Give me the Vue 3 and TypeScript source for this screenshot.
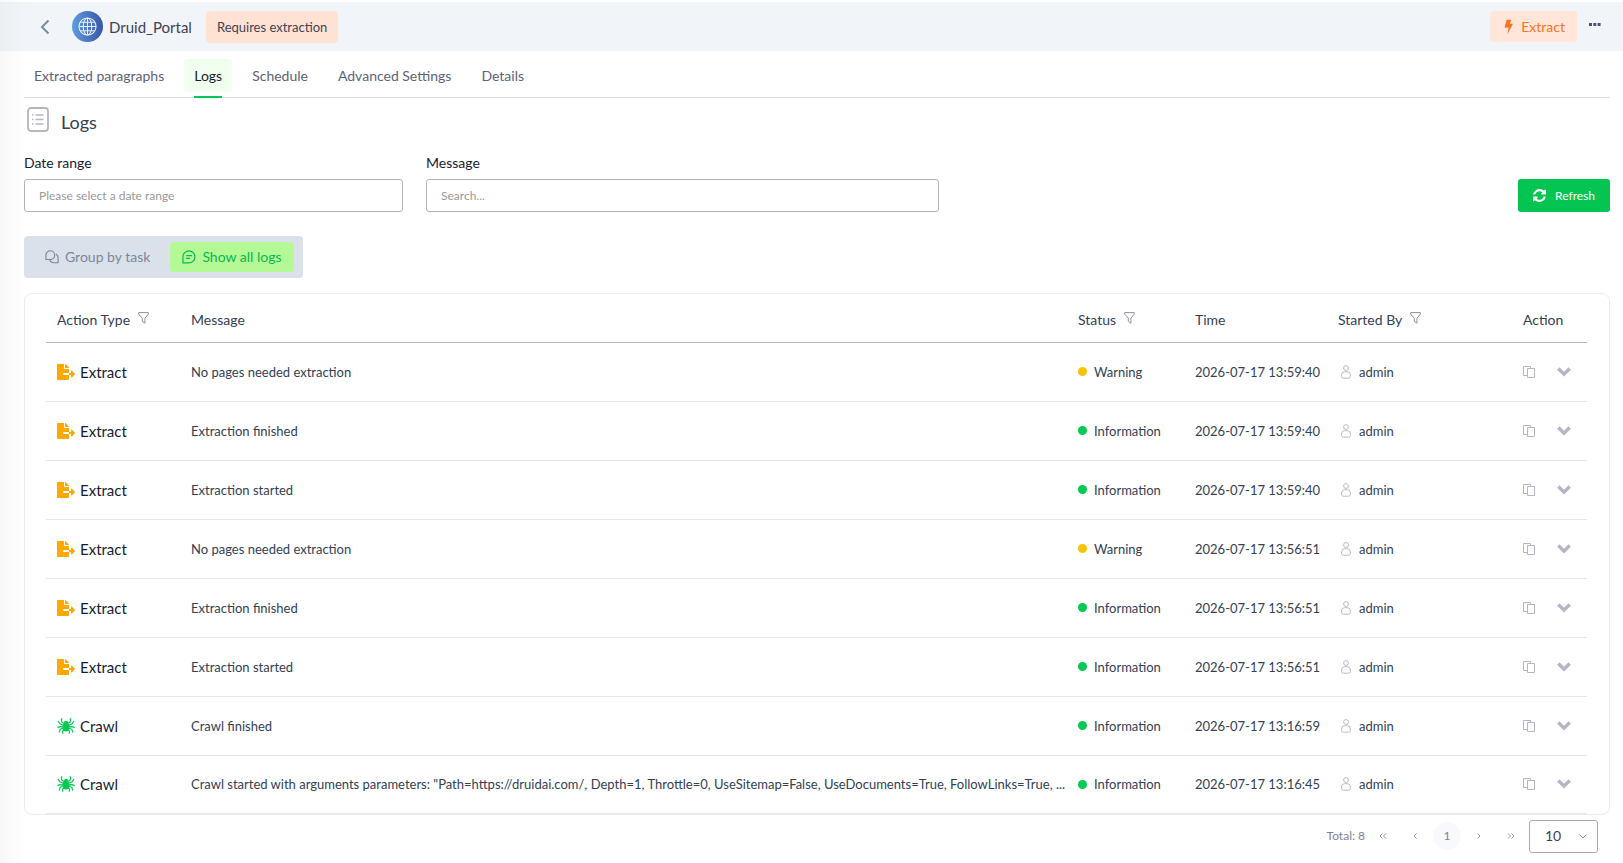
<script setup lang="ts">
import { ref } from 'vue'

interface LogRow {
  type: 'Extract' | 'Crawl'
  message: string
  status: 'Warning' | 'Information'
  time: string
  user: string
}

const tabs = ['Extracted paragraphs', 'Logs', 'Schedule', 'Advanced Settings', 'Details']
const activeTab = ref('Logs')
const view = ref<'group' | 'all'>('all')
const dateRange = ref('')
const search = ref('')
const pageSize = ref(10)

const rows: LogRow[] = [
  { type: 'Extract', message: 'No pages needed extraction', status: 'Warning', time: '2026-07-17 13:59:40', user: 'admin' },
  { type: 'Extract', message: 'Extraction finished', status: 'Information', time: '2026-07-17 13:59:40', user: 'admin' },
  { type: 'Extract', message: 'Extraction started', status: 'Information', time: '2026-07-17 13:59:40', user: 'admin' },
  { type: 'Extract', message: 'No pages needed extraction', status: 'Warning', time: '2026-07-17 13:56:51', user: 'admin' },
  { type: 'Extract', message: 'Extraction finished', status: 'Information', time: '2026-07-17 13:56:51', user: 'admin' },
  { type: 'Extract', message: 'Extraction started', status: 'Information', time: '2026-07-17 13:56:51', user: 'admin' },
  { type: 'Crawl', message: 'Crawl finished', status: 'Information', time: '2026-07-17 13:16:59', user: 'admin' },
  {
    type: 'Crawl',
    message: 'Crawl started with arguments parameters: "Path=https://druidai.com/, Depth=1, Throttle=0, UseSitemap=False, UseDocuments=True, FollowLinks=True, ...',
    status: 'Information',
    time: '2026-07-17 13:16:45',
    user: 'admin',
  },
]

const columns = [
  { label: 'Action Type', filter: true },
  { label: 'Message', filter: false },
  { label: 'Status', filter: true },
  { label: 'Time', filter: false },
  { label: 'Started By', filter: true },
  { label: 'Action', filter: false },
]
</script>

<template>
  <div class="page">
    <header class="topbar">
      <button class="bare back" aria-label="Back">
        <svg width="10" height="16" viewBox="0 0 10 16" fill="none" stroke="#7a8ba6" stroke-width="2"><path d="M8.500 1.500 2 8l6.500 6.500" /></svg>
      </button>
      <span class="avatar">
        <svg width="19" height="19" viewBox="0 0 20 20" fill="none" stroke="#e6eefb" stroke-width="1.100">
          <circle cx="10" cy="10" r="9" /><ellipse cx="10" cy="10" rx="4.500" ry="9" /><path d="M10 1v18M1 10h18M2.300 5.500h15.400M2.300 14.500h15.400" />
        </svg>
      </span>
      <h1>Druid_Portal</h1>
      <span class="badge">Requires extraction</span>
      <button class="extract">
        <svg width="9" height="16" viewBox="0 0 10 16" fill="#f97326"><path d="M3 0h5L6.500 4.500H10L3.800 16 5 8.500H0.500z" /></svg>
        Extract
      </button>
      <button class="bare more" aria-label="More">
        <svg width="12" height="3" viewBox="0 0 12 3" fill="#524d80"><path d="M0 0h3v3H0zM4.300 0h3v3h-3zM8.600 0h3v3h-3z" /></svg>
      </button>
    </header>

    <main>
      <nav class="tabs">
        <button v-for="t in tabs" :key="t" class="tab" :class="{ active: t === activeTab }" @click="activeTab = t">
          <span>{{ t }}</span>
        </button>
      </nav>

      <div class="title">
        <svg width="22" height="25" viewBox="0 0 22 25" fill="none" stroke="#b5b5c6">
          <rect x="1" y="1" width="20" height="23" rx="3" stroke-width="1.800" />
          <path d="M8.500 8h8M8.500 12.500h8M8.500 17h8M5 8h1.500M5 12.500h1.500M5 17h1.500" stroke-width="1.400" />
        </svg>
        <h2>Logs</h2>
      </div>

      <form class="filters" @submit.prevent>
        <div class="field date">
          <label for="range">Date range</label>
          <input id="range" v-model="dateRange" type="text" placeholder="Please select a date range" />
        </div>
        <div class="field message">
          <label for="message">Message</label>
          <input id="message" v-model="search" type="text" placeholder="Search..." />
        </div>
        <button type="submit" class="refresh">
          <svg width="13" height="13" viewBox="0 0 1536 1536" fill="#fff"><path d="M1511 928q0 5-1 7-64 268-268 434.500t-478 166.500q-146 0-282.500-55t-243.500-157l-129 129q-19 19-45 19t-45-19-19-45v-448q0-26 19-45t45-19h448q26 0 45 19t19 45-19 45l-137 137q71 66 161 102t187 36q134 0 250-65t186-179q11-17 53-117 8-23 30-23h192q13 0 22.500 9.500t9.500 22.500zm25-800v448q0 26-19 45t-45 19h-448q-26 0-45-19t-19-45 19-45l138-138q-148-137-349-137-134 0-250 65t-186 179q-11 17-53 117-8 23-30 23h-199q-13 0-22.500-9.500t-9.500-22.500v-7q65-268 270-434.500t480-166.500q146 0 284 55.500t245 156.500l130-129q19-19 45-19t45 19 19 45z" /></svg>
          Refresh
        </button>
      </form>

      <div class="toggle">
        <button :class="{ on: view === 'group' }" @click="view = 'group'">
          <svg width="14" height="14" viewBox="0 0 15 15" fill="none" stroke="currentColor" stroke-width="1.200" stroke-linejoin="round">
            <path d="M1 10.200V5.500A4.700 4.700 0 1 1 5.700 10.200z" /><path d="M11.700 4.200A4.800 4.800 0 0 1 14 8.500V13.600H9.500A4.800 4.800 0 0 1 5 10.800" />
          </svg>
          Group by task
        </button>
        <button :class="{ on: view === 'all' }" @click="view = 'all'">
          <svg width="14" height="14" viewBox="0 0 15 15" fill="none" stroke="currentColor" stroke-width="1.300" stroke-linejoin="round">
            <path d="M1 13.800V7.400A6.400 6.400 0 1 1 7.400 13.800z" /><path d="M4.500 6h6.200M4.500 9h4" />
          </svg>
          Show all logs
        </button>
      </div>

      <section class="card">
        <table>
          <colgroup>
            <col class="c-type" /><col /><col class="c-status" /><col class="c-time" /><col class="c-user" /><col class="c-action" />
          </colgroup>
          <thead>
            <tr>
              <th v-for="c in columns" :key="c.label" scope="col">
                <div class="head">
                  {{ c.label }}
                  <button v-if="c.filter" class="bare funnel" :aria-label="'Filter ' + c.label">
                    <svg width="11" height="12" viewBox="0 0 11 12" fill="none" stroke="#8b93a5"><path d="M.7.600h9.600v1.600L6.900 6.200v5L4.300 9.400V6.200L.7 2.200z" /></svg>
                  </button>
                </div>
              </th>
            </tr>
          </thead>
          <tbody>
            <tr v-for="(r, i) in rows" :key="i">
              <td>
                <div class="type">
                  <svg v-if="r.type === 'Extract'" width="18" height="16" viewBox="0 0 576 512" fill="#ffa800"><path d="M384 121.900c0-6.300-2.500-12.400-7-16.900L279.100 7c-4.500-4.500-10.600-7-17-7H256v128h128zM571 308l-95.700-96.400c-10.100-10.100-27.400-3-27.400 11.300V288h-64v64h64v65.200c0 14.300 17.300 21.400 27.400 11.300L571 332c6.600-6.600 6.600-17.400 0-24zm-379 28v-32c0-8.800 7.200-16 16-16h176V160H248c-13.200 0-24-10.800-24-24V0H24C10.700 0 0 10.700 0 24v464c0 13.300 10.700 24 24 24h336c13.300 0 24-10.700 24-24V352H208c-8.800 0-16-7.200-16-16z" /></svg>
                  <svg v-else width="18" height="16" viewBox="0 0 18 16" fill="none" stroke="#04c952" stroke-width="1.200" stroke-linejoin="round">
                    <path d="M7 5.500 4.800 4 4.300 1.500 5.200.400M11 5.500 13.200 4l.5-2.500L12.800.400M6 7.200 3 5.800 1 3M12 7.200l3-1.400L17 3M6 8.800 3 8.600.400 9.600M12 8.800l3-.2 2.600 1M6 10.200l-2.800 1L2.300 14.500M12 10.200l2.800 1 .9 3.300M7 11.500l-1.500 1.600.3 2.500M11 11.500l1.500 1.600-.3 2.500" />
                    <ellipse cx="9" cy="9" rx="2.800" ry="4" fill="#04c952" /><circle cx="9" cy="4.800" r="1.400" fill="#04c952" />
                  </svg>
                  {{ r.type }}
                </div>
              </td>
              <td class="msg">{{ r.message }}</td>
              <td>
                <div class="status"><i :class="r.status.toLowerCase()"></i>{{ r.status }}</div>
              </td>
              <td>{{ r.time }}</td>
              <td>
                <div class="user">
                  <svg width="10" height="14" viewBox="0 0 10 14" fill="none" stroke="#babac8"><circle cx="5" cy="3" r="2.400" /><path d="M3.500 6.700h3Q9.400 6.700 9.400 10v1.500q0 1.700-1.800 1.700H2.400Q.6 13.200.6 11.500V10Q.6 6.700 3.500 6.700z" /></svg>
                  {{ r.user }}
                </div>
              </td>
              <td>
                <div class="actions">
                  <button class="bare" aria-label="Copy">
                    <svg width="12" height="12" viewBox="0 0 12 12" fill="none" stroke="#b5b5c6"><path d="M4.500 2.500h7v9h-7zM4.500 9.500H.5V.5h7v2" /></svg>
                  </button>
                  <button class="bare" aria-label="Expand">
                    <svg width="14" height="10" viewBox="0 0 14 10" fill="none" stroke="#b5b5c6" stroke-width="3.400"><path d="M1.300 1.500 7 7.200l5.700-5.700" /></svg>
                  </button>
                </div>
              </td>
            </tr>
          </tbody>
        </table>
      </section>

      <footer class="pager">
        <span>Total: 8</span>
        <button class="bare" aria-label="First page"><svg width="8" height="6" viewBox="0 0 8 6"><path d="M3.500.500 1 3l2.500 2.500M7 .500 4.500 3 7 5.500" /></svg></button>
        <button class="bare" aria-label="Previous page"><svg width="8" height="6" viewBox="0 0 8 6"><path d="M5.500.500 3 3l2.500 2.500" /></svg></button>
        <button class="bare current" aria-current="page">1</button>
        <button class="bare" aria-label="Next page"><svg width="8" height="6" viewBox="0 0 8 6"><path d="M2.500.500 5 3 2.500 5.500" /></svg></button>
        <button class="bare" aria-label="Last page"><svg width="8" height="6" viewBox="0 0 8 6"><path d="M1 .500 3.500 3 1 5.500M4.500.500 7 3 4.500 5.500" /></svg></button>
        <div class="size">
          <select v-model="pageSize" aria-label="Rows per page">
            <option :value="10">10</option>
            <option :value="25">25</option>
            <option :value="50">50</option>
          </select>
          <svg width="8" height="5" viewBox="0 0 8 5"><path d="M.5.500 4 4 7.500.500" /></svg>
        </div>
      </footer>
    </main>
  </div>
</template>

<style>
body {
  background: #fff;
}
</style>

<style scoped>
.page {
  box-sizing: border-box;
  min-height: 100vh;
  padding-top: 2px;
  font-family: Lato, 'Liberation Sans', sans-serif;
  font-size: 13px;
  line-height: 20px;
  color: #334155;
  background: linear-gradient(90deg, #f8f8f9, #fff 28px);
}
* {
  box-sizing: border-box;
}
button,
input,
select {
  font: inherit;
  color: inherit;
}
svg {
  display: block;
  flex: none;
}
.bare {
  display: flex;
  align-items: center;
  justify-content: center;
  border: 0;
  padding: 0;
  background: none;
  cursor: pointer;
}
.topbar {
  display: flex;
  align-items: center;
  height: 49px;
  padding: 0 22px 0 40px;
  background: linear-gradient(90deg, #ebeff2, #f1f5f9 28px);
  color: #3f4254;
}
.avatar {
  display: flex;
  align-items: center;
  justify-content: center;
  width: 31px;
  height: 31px;
  margin: 0 6px 0 22px;
  border-radius: 50%;
  background: linear-gradient(90deg, #5d9ce0, #3b55a6);
}
h1 {
  margin: 0;
  font-size: 15px;
  font-weight: 400;
}
.badge {
  margin-left: 14px;
  padding: 6px 11px;
  border-radius: 4px;
  background: #ffe2d3;
}
.extract {
  display: flex;
  align-items: center;
  gap: 8px;
  height: 31px;
  margin-left: auto;
  padding: 0 12px 0 14px;
  border: 0;
  border-radius: 4px;
  background: #ffe6d9;
  color: #f97326;
  font-size: 14px;
}
.more {
  height: 16px;
  margin-left: 12px;
  padding-bottom: 4px;
}
main {
  padding: 0 13px 0 24px;
}
.tabs {
  display: flex;
  gap: 10px;
  height: 47px;
  border-bottom: 1px solid #dcdce6;
  font-size: 14px;
}
.tab {
  position: relative;
  height: 33px;
  margin-top: 8px;
  padding: 0 10px;
  border: 0;
  border-radius: 4px;
  background: none;
  color: #5e6278;
  cursor: pointer;
}
.tab.active {
  background: #f0ffee;
  color: #181c32;
}
.tab.active::after {
  content: '';
  position: absolute;
  left: 10px;
  right: 10px;
  bottom: -6px;
  height: 2px;
  background: #04c952;
}
.title {
  display: flex;
  gap: 12px;
  padding: 9px 0 0 3px;
}
h2 {
  margin: 5px 0 0;
  font-size: 18px;
  font-weight: 400;
}
.filters {
  display: flex;
  align-items: flex-end;
  gap: 23px;
  margin-top: 21px;
}
.field {
  display: flex;
  flex-direction: column;
  gap: 6px;
}
.date {
  flex: 0 1 379px;
}
.message {
  flex: 0 1 513px;
}
label {
  color: #181c32;
  font-size: 14px;
}
.field input {
  height: 33px;
  width: 100%;
  padding: 0 14px;
  border: 1px solid #b3b3b3;
  border-radius: 3px;
  background: #fff;
  font-size: 12px;
}
.field input::placeholder {
  color: #999;
}
.refresh {
  display: flex;
  align-items: center;
  gap: 9px;
  height: 33px;
  margin-left: auto;
  padding: 0 15px;
  border: 0;
  border-radius: 3px;
  background: #04c552;
  color: #fff;
  font-size: 12px;
}
.toggle {
  display: inline-flex;
  margin-top: 24px;
  padding: 6px 9px;
  border-radius: 4px;
  background: #dbe1eb;
}
.toggle button {
  display: flex;
  align-items: center;
  gap: 6px;
  height: 30px;
  padding: 0 12px;
  border: 0;
  border-radius: 4px;
  background: none;
  color: #7c8798;
  font-size: 14px;
}
.toggle button:first-child {
  padding-right: 20px;
}
.toggle button.on {
  background: #b5f996;
  color: #04b950;
}
.card {
  margin-top: 15px;
  padding: 0 22px 0 21px;
  border: 1px solid #ececef;
  border-radius: 8px;
  background: #fff;
}
table {
  width: 100%;
  border-collapse: collapse;
  table-layout: fixed;
}
.c-type { width: 134px; }
.c-status { width: 117px; }
.c-time { width: 143px; }
.c-user { width: 185px; }
.c-action { width: 75px; }
th,
td {
  padding: 0 0 0 11px;
  text-align: left;
  font-weight: 400;
  white-space: nowrap;
}
th {
  height: 48px;
  padding-top: 4px;
  border-bottom: 1px solid #b5b5c6;
  font-size: 14px;
}
td {
  height: 59px;
  border-bottom: 1px solid #e1e6ef;
}
tr:last-child td {
  height: 58px;
}
.head {
  display: flex;
  align-items: center;
  gap: 8px;
}
.funnel {
  padding-bottom: 4px;
}
.type {
  display: flex;
  align-items: center;
  gap: 5px;
  color: #181c32;
  font-size: 15px;
}
.msg {
  overflow: hidden;
  text-overflow: ellipsis;
}
.status {
  display: flex;
  align-items: center;
  gap: 7px;
}
.status i {
  width: 9px;
  height: 9px;
  border-radius: 50%;
}
.warning { background: #f7c305; }
.information { background: #04c952; }
.user {
  display: flex;
  align-items: center;
  gap: 8px;
  padding-left: 3px;
}
.actions {
  display: flex;
  align-items: center;
  gap: 22px;
}
.pager {
  display: flex;
  align-items: center;
  justify-content: flex-end;
  gap: 4px;
  margin-top: 5px;
  padding-right: 12px;
  color: #7e8299;
  font-size: 12px;
}
.pager .bare {
  width: 28px;
  height: 28px;
  border-radius: 50%;
}
.pager .current {
  background: #f8f9fc;
}
.pager svg {
  fill: none;
  stroke: #8b93ab;
}
.size {
  display: grid;
  align-items: center;
  width: 69px;
}
.size select,
.size svg {
  grid-area: 1 / 1;
}
.size select {
  appearance: none;
  width: 100%;
  height: 33px;
  padding: 0 15px;
  border: 1px solid #a8aab5;
  border-radius: 3px;
  background: #fff;
  color: #3f4254;
  font-size: 14px;
}
.size svg {
  justify-self: end;
  margin-right: 11px;
  pointer-events: none;
}
</style>
